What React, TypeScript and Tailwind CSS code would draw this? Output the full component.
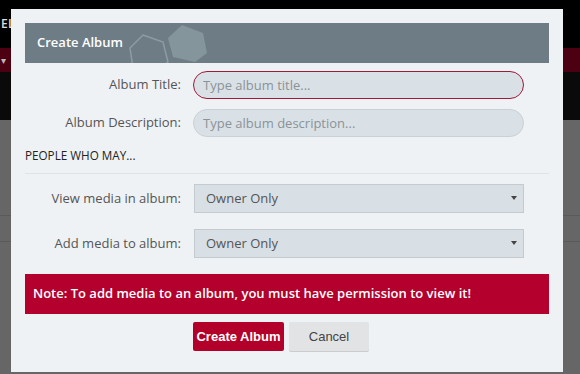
const Hexes = () => (
  <svg className="absolute left-0 top-0" width="220" height="40" viewBox="0 0 220 40">
    <polygon points="118,12 138,19 143,39 128,50 108,45 105,25" fill="none" stroke="#8d9ca3" strokeWidth="1.5" />
    <polygon points="157,2 178,10 182,30 170,39 148,34 143,15" fill="#85959c" />
  </svg>
);

const Field = ({ label, placeholder, active }: { label: string; placeholder: string; active?: boolean }) => (
  <div className="flex items-center">
    <label className="w-[156px] text-right text-[13px] text-[#555]">{label}</label>
    <input
      placeholder={placeholder}
      className={`ml-[12px] h-[28px] w-[331px] rounded-full border bg-[#dae1e6] px-[9px] text-[13px] text-[#444] outline-none placeholder:text-[#8a9398] ${
        active ? 'border-[#a0183a]' : 'border-[#c9d1d6]'
      }`}
    />
  </div>
);

const SelectRow = ({ label }: { label: string }) => (
  <div className="flex items-center">
    <label className="w-[156px] text-right text-[13px] text-[#555]">{label}</label>
    <div className="relative ml-[13px] flex h-[29px] w-[330px] items-center border border-[#c3cbd0] bg-[#d8dfe5] px-[11px] text-[13px] text-[#555]">
      Owner Only
      <span className="absolute right-[6px] top-[11px] h-0 w-0 border-x-[3px] border-t-[4px] border-x-transparent border-t-[#444]" />
    </div>
  </div>
);

export default function App() {
  return (
    <div className="relative h-[374px] w-[580px] overflow-hidden bg-[#666] font-['Open_Sans',sans-serif]">
      {/* page behind the overlay */}
      <div className="flex h-[48px] items-center bg-black pl-[1px] text-[12px] font-semibold tracking-wide text-[#ddd]">ELA</div>
      <div className="flex h-[24px] items-center bg-[#4d0012] pl-[1px] text-[10px] text-[#bbb]">▾</div>
      <div className="h-[48px] bg-[#0a0a0a]" />
      <div className="h-[95px]" />
      <div className="h-[27px] border-y border-[#5a5a5a]" />

      {/* modal */}
      <div className="absolute left-[11px] top-[9px] h-[363px] w-[552px] bg-[#eef2f5] px-[14px] pt-[14px]">
        <div className="relative flex h-[40px] items-center overflow-hidden bg-[#6e7d85] px-[12px] text-[13px] font-semibold text-white">
          <Hexes />
          <span className="relative">Create Album</span>
        </div>

        <div className="mt-[8px] flex flex-col gap-[10px]">
          <Field label="Album Title:" placeholder="Type album title..." active />
          <Field label="Album Description:" placeholder="Type album description..." />
        </div>

        <div className="mt-[10px] text-[11.7px] leading-[17px] text-[#222]">PEOPLE WHO MAY...</div>
        <div className="mt-[9px] border-t border-[#dde3e7]" />

        <div className="mt-[10px] flex flex-col gap-[16px]">
          <SelectRow label="View media in album:" />
          <SelectRow label="Add media to album:" />
        </div>

        <div className="mt-[16px] flex h-[40px] items-center bg-[#b4002c] px-[8px] text-[13px] font-semibold text-white">
          Note: To add media to an album, you must have permission to view it!
        </div>

        <div className="mt-[8px] flex gap-[5px] pl-[168px] font-['Liberation_Sans',sans-serif] text-[13px]">
          <button className="h-[29px] w-[91px] rounded-[2px] bg-[#b3002a] font-bold text-white">Create Album</button>
          <button className="h-[29px] w-[80px] rounded-[2px] bg-[#e2e3e4] text-[#444] shadow-[0_1px_0_#ccc]">Cancel</button>
        </div>
      </div>
    </div>
  );
}
